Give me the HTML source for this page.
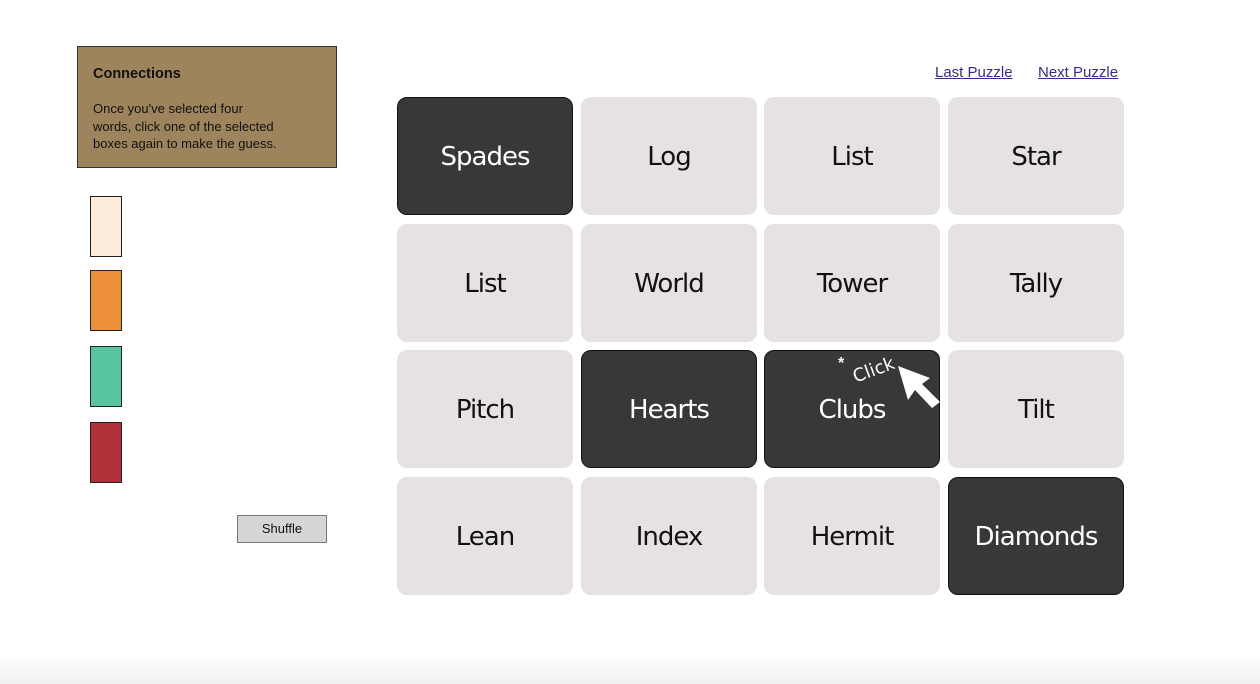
<!DOCTYPE html>
<html><head><style>
body{margin:0;width:1260px;height:684px;background:#fff;position:relative;overflow:hidden;font-family:"Liberation Sans",sans-serif}
.info{position:absolute;left:77px;top:46px;width:260px;height:122px;background:#9e845c;border:1.5px solid #333;box-sizing:border-box;color:#111}
.info h1{margin:0;position:absolute;left:15px;top:19px;font-size:14.5px;font-weight:bold}
.info p{margin:0;position:absolute;left:15px;top:53px;font-size:13px;line-height:17.5px;white-space:nowrap}
.sw{position:absolute;left:90px;width:32px;height:61px;border:1px solid #222;box-sizing:border-box}
.shuf{position:absolute;left:237px;top:515px;width:90px;height:28px;background:#d6d6d6;border:1.5px solid #777;box-sizing:border-box;font-size:13px;text-align:center;line-height:25px;color:#111}
a{position:absolute;top:64px;font-size:15px;color:#3a2a8a;text-decoration:underline}
.t{position:absolute;width:176px;height:118px;border-radius:10px;background:#e6e2e1;display:flex;align-items:center;justify-content:center;font-family:"DejaVu Sans",sans-serif;font-size:26px;color:#111;letter-spacing:-1px;padding-top:2px;box-sizing:border-box}
.d{background:#383838;color:#fff;border:1px solid #111}
.sh{position:absolute;left:0;right:0;bottom:0;height:30px;background:linear-gradient(#fff,#f0f0f0)}
</style></head><body>
<div class="info"><h1>Connections</h1><p>Once you've selected four<br>words, click one of the selected<br>boxes again to make the guess.</p></div>
<div class="sw" style="top:196px;background:#fcebd9"></div>
<div class="sw" style="top:270px;background:#ec9139"></div>
<div class="sw" style="top:346px;background:#58c49f"></div>
<div class="sw" style="top:422px;background:#b0313a"></div>
<div class="shuf">Shuffle</div>
<a style="left:935px">Last Puzzle</a><a style="left:1038px">Next Puzzle</a>
<div class="t d" style="left:397px;top:97px">Spades</div>
<div class="t" style="left:581px;top:97px">Log</div>
<div class="t" style="left:764px;top:97px">List</div>
<div class="t" style="left:948px;top:97px">Star</div>
<div class="t" style="left:397px;top:224px">List</div>
<div class="t" style="left:581px;top:224px">World</div>
<div class="t" style="left:764px;top:224px">Tower</div>
<div class="t" style="left:948px;top:224px">Tally</div>
<div class="t" style="left:397px;top:350px">Pitch</div>
<div class="t d" style="left:581px;top:350px">Hearts</div>
<div class="t d" style="left:764px;top:350px">Clubs</div>
<div class="t" style="left:948px;top:350px">Tilt</div>
<div class="t" style="left:397px;top:477px">Lean</div>
<div class="t" style="left:581px;top:477px">Index</div>
<div class="t" style="left:764px;top:477px">Hermit</div>
<div class="t d" style="left:948px;top:477px">Diamonds</div>
<svg style="position:absolute;left:830px;top:340px" width="120" height="80">
<text x="22" y="37" fill="#fff" font-size="18" font-family="DejaVu Sans" transform="rotate(-20 40 30)">Click</text>
<text x="8" y="28" fill="#fff" font-size="16" font-weight="bold">*</text>
<path d="M68 26 L100 38 L92 44 L110 62 L102 68 L85 50 L78 60 Z" fill="#fff"/>
</svg>
<div class="sh"></div>
</body></html>
